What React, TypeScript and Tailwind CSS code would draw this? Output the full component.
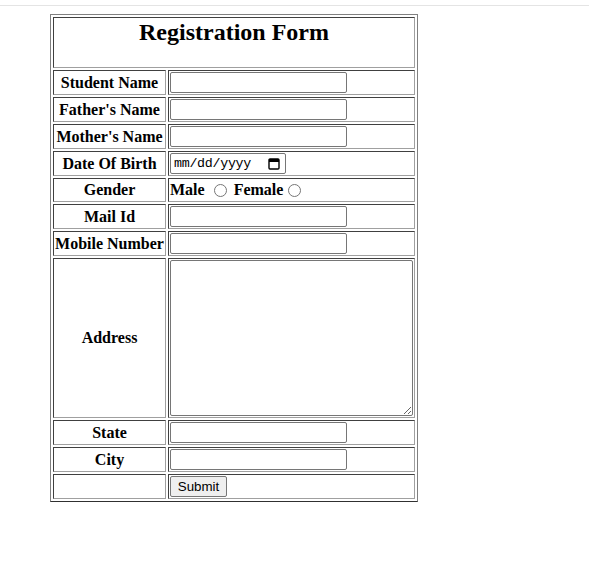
import React from "react";

// Shared cell look: the old-school "table border=1" inset cell
const cell =
  "border border-t-[#404040] border-l-[#404040] border-r-[#a0a0a0] border-b-[#a0a0a0] p-[1px]";
const label = `${cell} w-[113px] text-center align-middle font-bold whitespace-nowrap`;
const field = `${cell} text-left align-middle`;
const textInput =
  "block h-[21px] w-[177px] rounded-[2px] border border-[#767676] bg-white px-[2px] font-['Liberation_Sans',Arial,sans-serif] text-[13.33px] outline-none";
const radio =
  "block h-[13px] w-[13px] appearance-none rounded-full border border-[#767676] bg-white";

export default function App(): React.ReactElement {
  const topFields = ["Student Name", "Father's Name", "Mother's Name"];

  return (
    <div className="min-h-screen bg-white text-black">
      {/* faint strip at the very top */}
      <div className="h-[5px] bg-white" />
      <div className="h-px bg-[#e4e4e4]" />

      <div className="ml-[50px] mt-[8px]">
        <table className="border-separate border-spacing-[2px] border border-t-[#808080] border-l-[#808080] border-r-[#808080] border-b-[#303030] font-['Liberation_Serif','Times_New_Roman',serif] text-[16px] leading-[normal]">
          <tbody>
            <tr>
              <th colSpan={2} className={`${cell} align-top`}>
                <div className="h-[47px] text-[24px] font-bold">Registration Form</div>
              </th>
            </tr>

            {topFields.map((name) => (
              <tr key={name}>
                <th className={label}>{name}</th>
                <td className={field}>
                  <input type="text" className={textInput} />
                </td>
              </tr>
            ))}

            <tr>
              <th className={label}>Date Of Birth</th>
              <td className={field}>
                <div className="flex h-[21px] w-[116px] items-center justify-between rounded-[2px] border border-[#767676] bg-white pl-[3px] pr-[5px] font-['Liberation_Mono','Courier_New',monospace] text-[13.33px]">
                  <span className="tracking-[-0.3px]">mm/dd/yyyy</span>
                  <svg width="12" height="13" viewBox="0 0 12 13" className="text-black">
                    <rect x="1" y="2" width="10" height="10" rx="1" fill="none" stroke="currentColor" strokeWidth="1.4" />
                    <rect x="1" y="2" width="10" height="3" fill="currentColor" />
                  </svg>
                </div>
              </td>
            </tr>

            <tr>
              <th className={label}>Gender</th>
              <td className={field}>
                <div className="flex h-[20px] items-center font-bold">
                  <span>Male</span>
                  <input type="radio" name="gender" className={`${radio} ml-[9px] mr-[7px]`} />
                  <span>Female</span>
                  <input type="radio" name="gender" className={`${radio} ml-[5px]`} />
                </div>
              </td>
            </tr>

            <tr>
              <th className={label}>Mail Id</th>
              <td className={field}>
                <input type="text" className={textInput} />
              </td>
            </tr>

            <tr>
              <th className={label}>Mobile Number</th>
              <td className={field}>
                <input type="text" className={textInput} />
              </td>
            </tr>

            <tr>
              <th className={label}>Address</th>
              <td className={field}>
                <textarea className="block h-[156px] w-[243px] resize rounded-[2px] border border-[#767676] bg-white p-[2px] font-['Liberation_Mono',monospace] text-[13.33px] outline-none" />
              </td>
            </tr>

            <tr>
              <th className={label}>State</th>
              <td className={field}>
                <input type="text" className={textInput} />
              </td>
            </tr>

            <tr>
              <th className={label}>City</th>
              <td className={field}>
                <input type="text" className={textInput} />
              </td>
            </tr>

            <tr>
              <td className={cell} />
              <td className={field}>
                <button
                  type="button"
                  className="flex h-[21px] w-[57px] items-center justify-center rounded-[2px] border border-[#767676] bg-[#efefef] font-['Liberation_Sans',Arial,sans-serif] text-[13.33px] text-black"
                >
                  Submit
                </button>
              </td>
            </tr>
          </tbody>
        </table>
      </div>
    </div>
  );
}
